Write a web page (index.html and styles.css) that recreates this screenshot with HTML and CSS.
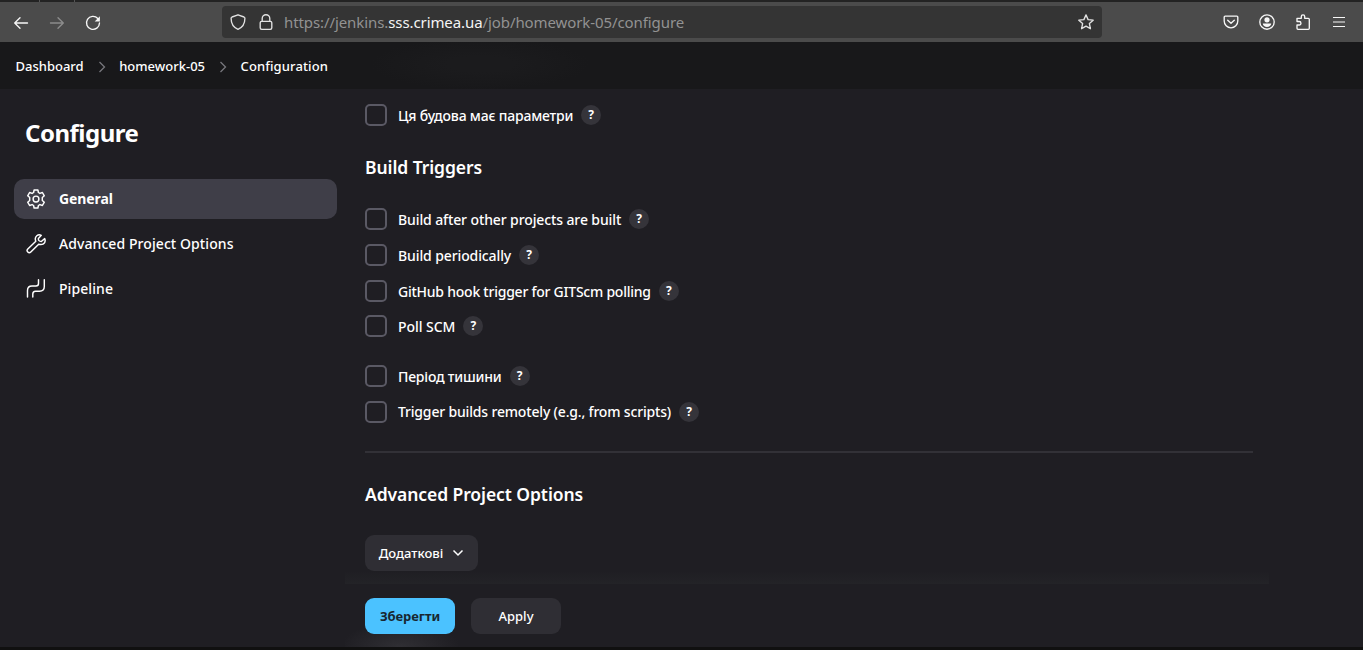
FILE: index.html
```html
<!DOCTYPE html>
<html lang="uk">
<head>
<meta charset="utf-8">
<title>Configuration</title>
<link rel="stylesheet" href="styles.css">
</head>
<body>
<div class="tabstrip"><i></i><i></i></div>
<nav class="toolbar">
  <div class="nav-buttons">
    <svg class="ic" viewBox="0 0 16 16"><path d="M14.500 8H2M7 2.700 1.700 8 7 13.300"/></svg>
    <svg class="ic dim" viewBox="0 0 16 16"><path d="M1.500 8H14M9 2.700 14.300 8 9 13.300"/></svg>
    <svg class="ic" viewBox="0 0 16 16"><path d="M12.800 3.500A6.500 6.500 0 1 0 14.500 8"/><path class="solid" d="M14.900 1.300v5.200H9.700z"/></svg>
  </div>
  <div class="urlbar">
    <svg class="ic" viewBox="0 0 16 16"><path d="M8 .8 14 3q.9.4.9 1.300C14.900 9.500 12.500 13.500 8 15.300 3.500 13.500 1.100 9.500 1.100 4.300Q1.100 3.400 2 3z"/></svg>
    <svg class="ic lock" viewBox="0 0 16 16"><path d="M4.200 7V4.500a3.800 3.800 0 0 1 7.600 0V7"/><rect x="2.200" y="7.300" width="11.600" height="8" rx="1.500"/></svg>
    <span class="url">https://jenkins.<b>sss.crimea.ua</b>/job/homework-05/configure</span>
    <svg class="ic" viewBox="0 0 16 16"><path d="m8 .9 2.100 4.700 5.100.6-3.800 3.400 1 5.100L8 12.200l-4.400 2.500 1-5.100L.8 6.200l5.100-.6z"/></svg>
  </div>
  <div class="tools">
    <svg class="ic" viewBox="0 0 16 16"><path d="M2.200 2.100h11.600q1 0 1 1V7a6.800 6.800 0 0 1-13.600 0V3.100q0-1 1-1zM4.700 6.200 8 9.300l3.300-3.100"/></svg>
    <svg class="ic profile" viewBox="0 0 16 16"><circle cx="8" cy="8" r="7.200"/><circle class="solid" cx="8" cy="5.800" r="2.600"/><path class="solid" d="M3.800 9.500h8.400c0 2.200-2 3.500-4.200 3.500s-4.200-1.300-4.200-3.500z"/></svg>
    <svg class="ic" viewBox="0 0 16 16"><path d="M2 7.500V4.300h4.300V2.500a1.700 1.700 0 0 1 3.400 0v1.800h3.600q1 0 1 1v9q0 1-1 1H3q-1 0-1-1v-3.300h2.200a1.700 1.700 0 0 0 0-3.500H2z"/></svg>
    <svg class="ic menu" viewBox="0 0 16 16"><path d="M2 3.500h12M2 8h12M2 12.500h12"/></svg>
  </div>
</nav>
<header class="crumbs">
  <span class="c1">Dashboard</span>
  <svg class="sep" viewBox="0 0 8 12"><path d="m1.500 1 5 5-5 5"/></svg>
  <span class="c2">homework-05</span>
  <svg class="sep" viewBox="0 0 8 12"><path d="m1.500 1 5 5-5 5"/></svg>
  <span class="c3">Configuration</span>
</header>
<div class="page">
  <aside class="side">
    <h1>Configure</h1>
    <div class="task active">
      <svg viewBox="0 0 20 20"><path d="M8.100 1h3.800l.5 2.500 1.500.9 2.500-.9 1.900 3.300-2 1.700v3l2 1.700-1.900 3.300-2.500-.9-1.500.9-.5 2.500H8.100l-.5-2.500-1.500-.9-2.500.9-1.900-3.300 2-1.700v-3l-2-1.700 1.900-3.300 2.500.9 1.500-.9z"/><circle cx="10" cy="10" r="2.900"/></svg>
      <span class="t1">General</span>
    </div>
    <div class="task">
      <svg viewBox="0 0 20 20"><path d="M18.700 4.600c.9 2.300.2 4.200-1.300 5.200-1.400.9-3.100.8-4.700.4l-7.900 7.900a2.100 2.100 0 0 1-3-3l8-7.800C8.900 5 9.300 2.900 10.800 1.700c1.300-1 3-1.100 4.500-.4l-2.900 3.100q-.3 2.900 2.900 3.100z"/></svg>
      <span class="t2">Advanced Project Options</span>
    </div>
    <div class="task">
      <svg viewBox="0 0 20 20"><path d="M1.500 18v-6.500q0-4.500 4.500-4.500h4q2.500 0 2.500-2.500V.8M6.800 18v-3q0-2.800 2.700-2.800h4q4.800 0 4.800-4.700V.8"/></svg>
      <span class="t3">Pipeline</span>
    </div>
  </aside>
  <main class="main">
    <label class="row r0"><i class="box"></i><span>Ця будова має параметри</span><b class="help">?</b></label>
    <h2 class="h-triggers">Build Triggers</h2>
    <div class="rows">
      <label class="row r1"><i class="box"></i><span>Build after other projects are built</span><b class="help">?</b></label>
      <label class="row r2"><i class="box"></i><span>Build periodically</span><b class="help">?</b></label>
      <label class="row r3"><i class="box"></i><span>GitHub hook trigger for GITScm polling</span><b class="help">?</b></label>
      <label class="row r4"><i class="box"></i><span>Poll SCM</span><b class="help">?</b></label>
    </div>
    <div class="rows remote">
      <label class="row r5"><i class="box"></i><span>Період тишини</span><b class="help">?</b></label>
      <label class="row r6"><i class="box"></i><span>Trigger builds remotely (e.g., from scripts)</span><b class="help">?</b></label>
    </div>
    <hr>
    <h2 class="h-advanced">Advanced Project Options</h2>
    <button class="btn more"><span>Додаткові</span><svg viewBox="0 0 12 8"><path d="m1.500 1.500 4.500 4.500 4.500-4.500"/></svg></button>
    <div class="actions">
      <button class="btn save"><span>Зберегти</span></button>
      <button class="btn apply"><span>Apply</span></button>
    </div>
  </main>
</div>
</body>
</html>
```
FILE: styles.css
```css
* { box-sizing: border-box; }
body {
  margin: 0; width: 1363px; height: 650px; overflow: hidden;
  display: flex; flex-direction: column;
  background: #1f1e23; color: #fff;
  border-bottom: 3px solid #101010;
  font-family: "Noto Sans", "Open Sans", sans-serif;
  font-size: 14px; font-weight: 500;
}
svg { fill: none; stroke: currentColor; flex: none; }
.tabstrip { height: 2px; background: #232323; display: flex; gap: 34px; padding-left: 39px; }
.tabstrip i { width: 1px; height: 2px; background: #555; }
.toolbar { height: 40px; background: #4b4b4b; display: flex; align-items: center; color: #f7f7f7; }
.nav-buttons { display: flex; gap: 20px; padding: 1px 0 0 13px; width: 222px; }
.ic { width: 16px; height: 16px; stroke-width: 1.350; stroke-linejoin: round; stroke-linecap: round; }
.solid { fill: currentColor; stroke: none; }
.dim { color: #8c8c8c; }
.urlbar { width: 880px; height: 32px; border-radius: 4px; background: #343434; display: flex; align-items: center; padding: 0 8px; color: #e2e2e2; }
.lock { margin-left: 12px; }
.url { flex: 1; margin-left: 10px; color: #929292; font-size: 15px; font-weight: 400; letter-spacing: -0.090px; white-space: nowrap; }
.url b { color: #f4f4f4; font-weight: 400; }
.tools { display: flex; gap: 20px; margin-left: 121px; }
.profile { overflow: visible; }
.menu { stroke-width: 1.200; stroke-linecap: butt; }
.crumbs {
  height: 47px; display: flex; align-items: center; padding: 0 0 0 15.500px; font-size: 13px; white-space: nowrap;
  background: radial-gradient(110px 26px at 480px 22px, #1b1b1d 30%, #18181a 100%);
}
.sep { width: 8px; height: 12px; margin: 2px 13.500px 0 14px; color: #77777d; stroke-width: 1.300; }
.c3 { letter-spacing: 0.120px; }
.page { display: flex; flex: 1; min-height: 0; }
.side { width: 365px; padding: 26px 28px 0 14px; }
h1 { margin: 0 0 29px 11px; font-size: 24px; line-height: 35px; font-weight: 700; letter-spacing: -0.500px; }
.task { height: 40px; border-radius: 10px; margin-bottom: 5px; padding-left: 12px; display: flex; align-items: center; gap: 13px; white-space: nowrap; }
.task svg { width: 20px; height: 20px; stroke-width: 1.450; stroke-linejoin: round; stroke-linecap: round; }
.task span { padding-bottom: 2px; letter-spacing: 0.080px; }
.active { background: #3f3e48; font-weight: 700; }
.task .t1 { letter-spacing: -0.100px; }
.main { flex: 1; padding-top: 15px; display: flex; flex-direction: column; align-items: flex-start; }
.row { height: 22px; display: flex; align-items: center; white-space: nowrap; letter-spacing: -0.110px; }
.r0 { letter-spacing: -0.190px; }
.r3 { letter-spacing: -0.240px; }
.r4 { letter-spacing: -0.060px; }
.r5 { letter-spacing: -0.200px; }
.r6 { letter-spacing: -0.170px; }
.r6 span { padding-bottom: 1px; }
.box { width: 22px; height: 22px; border: 2px solid #5a5964; border-radius: 5px; margin-right: 11px; }
.help { width: 20px; height: 20px; border-radius: 50%; background: #35343a; font-size: 12px; line-height: 20px; letter-spacing: 0; text-align: center; margin-left: 8px; }
h2 { margin: 0; font-size: 17.500px; line-height: 24px; font-weight: 600; letter-spacing: -0.080px; white-space: nowrap; }
.h-triggers { margin: 29px 0 29px; }
.rows { display: flex; flex-direction: column; gap: 14px; }
.r4 { margin-top: -1px; }
.remote { margin-top: 28px; }
hr { width: 888px; height: 2px; border: 0; margin: 28px 0 29px; background: #323137; }
.h-advanced { margin-bottom: 29px; }
.btn { height: 36px; border: 0; border-radius: 9px; background: #2f2e34; color: #fff; font: 500 13px "Noto Sans", "Open Sans", sans-serif; display: flex; align-items: center; justify-content: center; padding: 0; white-space: nowrap; }
.more { width: 113px; gap: 9px; }
.more svg { width: 12px; height: 8px; stroke-width: 1.500; }
.actions {
  display: flex; gap: 16px; width: 998px; height: 76px; padding: 27px 0 0 20px; margin-left: -20px;
  background:
    radial-gradient(60px 24px at 55px 76px, #302f34, transparent) no-repeat,
    linear-gradient(#1f1e23, #232327) 0 0 / 924px 13px no-repeat;
}
.save { width: 90px; background: #4bc2ff; color: #182630; font-weight: 700; letter-spacing: -0.080px; }
.apply { width: 90px; }
```
